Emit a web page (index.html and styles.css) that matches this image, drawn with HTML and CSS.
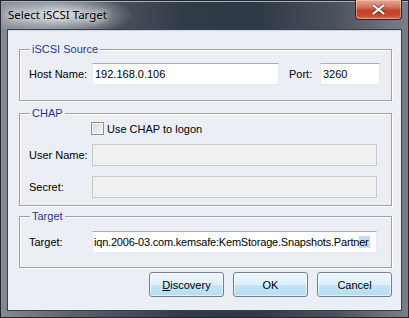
FILE: index.html
```html
<html>

<head>
    <link rel="stylesheet" href="styles.css">
</head>

<body>
    <div class="window">
        <div class="titlebar">
            <span class="title">Select iSCSI Target</span>
            <div class="close">
                <svg width="13" height="11" viewBox="0 0 13 11">
                    <path d="M1.5 1.5 L11.5 9.5 M11.5 1.5 L1.5 9.5" stroke="#3b2a2a" stroke-width="4" stroke-linecap="round" opacity="0.55"/>
                    <path d="M1.5 1.5 L11.5 9.5 M11.5 1.5 L1.5 9.5" stroke="#ffffff" stroke-width="2.2" stroke-linecap="round"/>
                </svg>
            </div>
        </div>
        <div class="client">
            <fieldset class="group source">
                <legend>iSCSI Source</legend>
                <div class="row">
                    <span class="lbl">Host Name:</span>
                    <div class="field host">192.168.0.106</div>
                    <span class="lbl port-lbl">Port:</span>
                    <div class="field port">3260</div>
                </div>
            </fieldset>

            <fieldset class="group chap">
                <legend>CHAP</legend>
                <div class="row check-row">
                    <span class="check"></span>
                    <span>Use CHAP to logon</span>
                </div>
                <div class="row">
                    <span class="lbl">User Name:</span>
                    <div class="field wide disabled"></div>
                </div>
                <div class="row secret-row">
                    <span class="lbl">Secret:</span>
                    <div class="field wide disabled"></div>
                </div>
            </fieldset>

            <fieldset class="group target">
                <legend>Target</legend>
                <div class="row">
                    <span class="lbl">Target:</span>
                    <div class="field wide long">iqn.2006-03.com.kemsafe:KemStorage.Snapshots.Partn<span class="hl">er</span></div>
                </div>
            </fieldset>

            <div class="buttons">
                <button><u>D</u>iscovery</button>
                <button>OK</button>
                <button>Cancel</button>
            </div>
        </div>
    </div>
</body>

</html>
```

FILE: styles.css
```css
body {
    margin: 0;
    font-family: "Liberation Sans", Arial, sans-serif;
    font-size: 11px;
}

.window {
    width: 409px;
    height: 318px;
    box-sizing: border-box;
    padding: 0 7px 7px 7px;
    background:
        radial-gradient(ellipse 75px 22px at 58px 15px, rgba(225, 230, 235, 0.9), rgba(200, 206, 212, 0) 100%),
        linear-gradient(to right, #858b92 0%, #59616b 18%, #313a47 45%, #2f3846 62%, #4a525d 82%, #7a8088 100%);
    box-shadow: inset 0 0 0 1px #23282e, inset 0 2px 0 #a9afb5;
    display: flex;
    flex-direction: column;
}

.titlebar {
    height: 29px;
    display: flex;
    align-items: flex-start;
    justify-content: space-between;
}

.title {
    margin-top: 7px;
    margin-left: 1px;
    font-family: "Noto Sans", "DejaVu Sans", sans-serif;
    font-size: 11.5px;
    color: #000;
    text-shadow: 0 0 6px #fff, 0 0 10px #fff;
}

.close {
    width: 47px;
    height: 20px;
    box-sizing: border-box;
    border: 1px solid #40201c;
    border-top: none;
    border-radius: 0 0 4px 4px;
    background: linear-gradient(to bottom, #e9a896 0%, #d47a65 35%, #c3432a 55%, #c9462c 80%, #d8704f 100%);
    box-shadow: inset 0 0 0 1px rgba(255, 210, 200, 0.45);
    display: flex;
    align-items: center;
    justify-content: center;
}

.client {
    flex: 1;
    background: #eceef6;
    border: 1px solid #3a414b;
    box-shadow: inset 0 1px 0 #c8d4ec;
    padding: 12px 9px 0 11px;
}

.group {
    margin: 0;
    min-width: 0;
    padding: 7px 11px 15px 9px;
    border: 1px solid #a0a0a0;
    box-shadow: inset 1px 1px 0 #fff, 1px 1px 0 #fff;
}

.group legend {
    padding: 0 2px;
    margin-left: 1px;
    line-height: 14px;
    color: #1f3490;
}

.chap {
    margin-top: 5px;
    padding-top: 2px;
    padding-bottom: 7px;
    padding-right: 14px;
}

.target {
    margin-top: 3px;
    padding-top: 8px;
    padding-right: 14px;
    padding-bottom: 14px;
}

.row {
    display: flex;
    align-items: center;
}

.lbl {
    width: 63px;
    flex-shrink: 0;
    color: #000;
}

.port-lbl {
    width: 31px;
    margin-left: 10px;
}

.field {
    height: 22px;
    box-sizing: border-box;
    padding: 0 2px;
    line-height: 20px;
    background: #fff;
    border: 1px solid #e3e9ef;
    border-top-color: #abadb3;
    white-space: nowrap;
    overflow: hidden;
}

.host {
    width: 187px;
}

.port {
    width: 60px;
}

.wide {
    flex: 1;
    min-width: 0;
}

.disabled {
    background: #f0f0f0;
    border-color: #c9c9c9;
}

.long {
    padding-left: 1px;
    letter-spacing: -0.2px;
}

.hl {
    background: #c4dcf0;
    padding-right: 1px;
}

.check-row {
    height: 13px;
    margin-bottom: 9px;
    padding-left: 62px;
}

.check {
    width: 13px;
    height: 13px;
    box-sizing: border-box;
    border: 1px solid #8f8f8f;
    background: linear-gradient(135deg, #d8d8d8, #f4f4f4);
    box-shadow: inset 0 0 0 1px #f4f4f4;
    margin-right: 3px;
}

.secret-row {
    margin-top: 10px;
}

.buttons {
    display: flex;
    justify-content: flex-end;
    gap: 9px;
    margin-top: 4px;
}

button {
    width: 75px;
    height: 25px;
    font-family: "Liberation Sans", Arial, sans-serif;
    font-size: 11px;
    color: #000;
    border: 1px solid #6f8192;
    border-radius: 3px;
    background: linear-gradient(to bottom, #eef7fc 0%, #dff0fa 50%, #c6e5f6 52%, #b6dcf1 100%);
    box-shadow: inset 0 0 0 1px rgba(255, 255, 255, 0.6);
    padding: 0;
}
```
